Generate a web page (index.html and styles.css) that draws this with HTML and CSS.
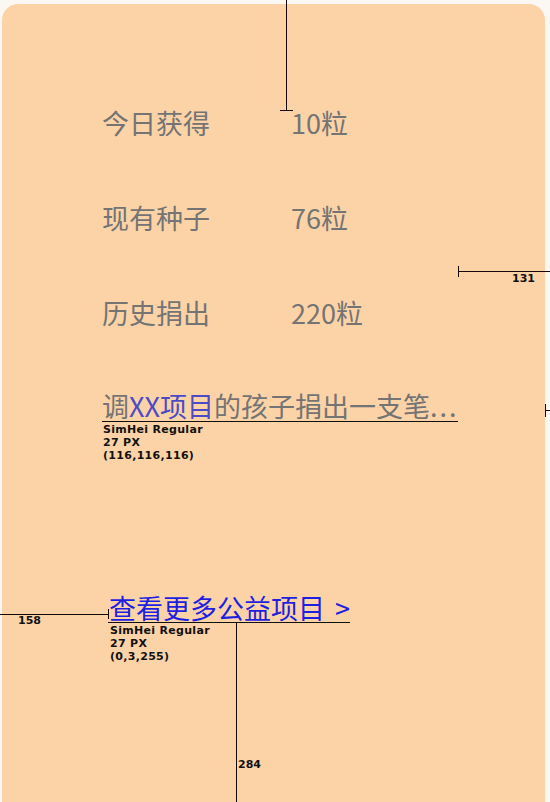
FILE: index.html
```html
<!DOCTYPE html>
<html lang="zh">
<head>
<meta charset="utf-8">
<title>种子</title>
<link rel="stylesheet" href="styles.css">
</head>
<body>
<div class="card">
  <div class="stats">
    <div class="row"><span>今日获得</span><span>10粒</span></div>
    <div class="row"><span>现有种子</span><span>76粒</span></div>
    <div class="row"><span>历史捐出</span><span>220粒</span></div>
  </div>
  <div class="slogan">调<span class="hl">XX项目</span>的孩子捐出一支笔<span class="dots">...</span></div>
  <div class="spec">SimHei Regular<br>27 PX<br>(116,116,116)</div>
  <a class="more">查看更多公益项目<span class="arrow">&gt;</span></a>
  <div class="spec spec-link">SimHei Regular<br>27 PX<br>(0,3,255)</div>
</div>

<div class="dim dim-top"></div>
<div class="dim dim-top-tick"></div>
<div class="dim dim-right"></div>
<div class="dim dim-right-tick"></div>
<div class="dim-label lbl-131">131</div>
<div class="dim dim-edge"></div>
<div class="dim dim-edge-tick"></div>
<div class="dim dim-left"></div>
<div class="dim dim-left-tick"></div>
<div class="dim-label lbl-158">158</div>
<div class="dim dim-bottom"></div>
<div class="dim-label lbl-284">284</div>
</body>
</html>
```

FILE: styles.css
```css
html, body {
  margin: 0;
  padding: 0;
  background: #fbf7f3;
  overflow: hidden;
}
body {
  position: relative;
  width: 550px;
  height: 802px;
}
.card {
  margin: 4px 0 0 2px;
  width: 543px;
  height: 830px;
  box-sizing: border-box;
  padding: 101px 0 0 100px;
  background: #fcd3a7;
  border-radius: 16px 16px 0 0;
  font-family: "Noto Sans CJK SC", "Noto Sans", sans-serif;
  font-size: 27px;
  color: #747474;
}
.stats {
  display: flex;
  flex-direction: column;
  gap: 59px;
}
.row {
  display: grid;
  grid-template-columns: 189px auto;
  line-height: 36px;
  height: 36px;
}
.slogan {
  width: fit-content;
  margin-top: 60px;
  line-height: 30px;
  height: 30px;
  border-bottom: 1px solid #111;
  white-space: nowrap;
}
.hl {
  color: #4b4bc6;
}
.dots {
  letter-spacing: 2px;
}
.spec {
  font-family: "DejaVu Sans", sans-serif;
  font-weight: bold;
  font-size: 11px;
  letter-spacing: 0.3px;
  line-height: 13px;
  color: #111;
  margin: 1px 0 0 1px;
}
.more {
  display: block;
  width: fit-content;
  margin: 131px 0 0 6px;
  line-height: 29px;
  height: 29px;
  color: #1f1fe0;
  border-bottom: 1px solid #111;
  white-space: nowrap;
  padding-left: 1px;
}
.arrow {
  margin-left: 10px;
}
.spec-link {
  margin-left: 8px;
}
.dim {
  position: absolute;
  background: #140808;
}
.dim-top { left: 286px; top: 0; width: 1px; height: 110px; }
.dim-top-tick { left: 280px; top: 110px; width: 13px; height: 1px; }
.dim-right { left: 458px; top: 271px; width: 92px; height: 1px; }
.dim-right-tick { left: 458px; top: 266px; width: 1px; height: 11px; }
.dim-edge { left: 545px; top: 410px; width: 5px; height: 1px; }
.dim-edge-tick { left: 545px; top: 404px; width: 1px; height: 13px; }
.dim-left { left: 0; top: 614px; width: 108px; height: 1px; }
.dim-left-tick { left: 108px; top: 609px; width: 1px; height: 10px; }
.dim-bottom { left: 236px; top: 622px; width: 1px; height: 180px; }
.dim-label {
  position: absolute;
  font-family: "DejaVu Sans", sans-serif;
  font-weight: bold;
  font-size: 11px;
  line-height: 13px;
  color: #111;
}
.lbl-131 { left: 512px; top: 272px; }
.lbl-158 { left: 18px; top: 614px; }
.lbl-284 { left: 238px; top: 758px; }
```
